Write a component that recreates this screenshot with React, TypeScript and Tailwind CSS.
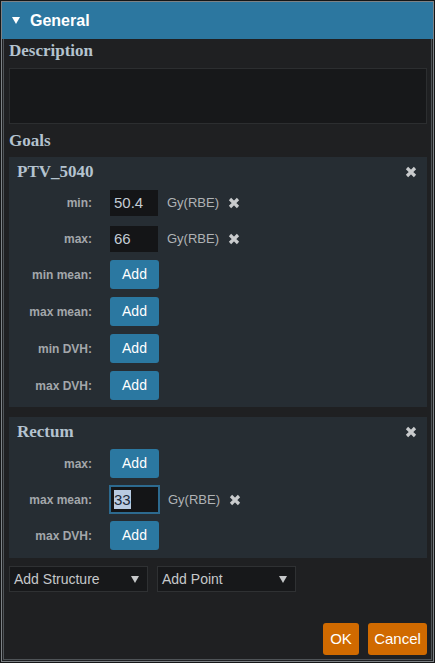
import React from "react";

const sans = { fontFamily: '"Liberation Sans", Arial, sans-serif' };
const serif = { fontFamily: '"Liberation Serif", Georgia, serif' };

function XIcon({ size = 12 }: { size?: number }) {
  return (
    <svg width={size} height={size} viewBox="0 0 12 12">
      <path d="M2 2 L10 10 M10 2 L2 10" stroke="#c9cbcd" strokeWidth="3.2" strokeLinecap="butt" />
    </svg>
  );
}

function Tri({ color, w = 9, h = 7 }: { color: string; w?: number; h?: number }) {
  return (
    <svg width={w} height={h} viewBox={`0 0 ${w} ${h}`}>
      <polygon points={`0,0 ${w},0 ${w / 2},${h}`} fill={color} />
    </svg>
  );
}

function Label({ children }: { children: React.ReactNode }) {
  return (
    <div className="w-[84px] text-right text-[12px] font-bold text-[#a3a7ab] pr-[1px]" style={sans}>
      {children}
    </div>
  );
}

function AddRow({ label }: { label: string }) {
  return (
    <div className="flex items-center h-[29px]">
      <Label>{label}</Label>
      <button
        className="ml-[17px] w-[49px] h-[29px] rounded-[3px] bg-[#2b78a1] text-white text-[14px] leading-[29px] text-center"
        style={sans}
      >
        Add
      </button>
    </div>
  );
}

function ValueRow({
  label,
  value,
  focused,
  className = "",
}: {
  label: string;
  value: string;
  focused?: boolean;
  className?: string;
}) {
  return (
    <div className={`flex items-center ${focused ? "h-[29px]" : "h-[26px]"} ${className}`}>
      <Label>{label}</Label>
      {focused ? (
        <div className="ml-[16px] w-[51px] h-[29px] border-2 border-[#2d6a8f] bg-[#141517] flex items-center pl-[3px]">
          <span className="bg-[#b9cbe2] text-[#1c2a3a] text-[15px] leading-[19px]" style={sans}>
            {value}
          </span>
        </div>
      ) : (
        <div
          className="ml-[17px] w-[48px] h-[26px] bg-[#141517] text-[#c3ccd4] text-[15px] leading-[25px] pl-[4px]"
          style={sans}
        >
          {value}
        </div>
      )}
      <span className={`${focused ? "ml-[8px]" : "ml-[9px]"} text-[13px] text-[#b0b3b6]`} style={sans}>
        Gy(RBE)
      </span>
      <span className="ml-[9px] flex items-center">
        <XIcon />
      </span>
    </div>
  );
}

function Card({ title, gap, children }: { title: string; gap: string; children: React.ReactNode }) {
  return (
    <div className={`bg-[#262d33] pt-[5px] flex flex-col ${gap}`}>
      <div className="flex items-center justify-between h-[20px] pl-[8px] pr-[10px]">
        <span className="text-[17px] font-bold text-[#b4c3cf] leading-[20px]" style={serif}>
          {title}
        </span>
        <XIcon />
      </div>
      {children}
    </div>
  );
}

function Select({ label }: { label: string }) {
  return (
    <div
      className="w-[139px] h-[26px] bg-[#17181a] border border-[#2f3133] flex items-center justify-between pl-[4px] pr-[8px] text-[14px] text-[#c6c8ca]"
      style={sans}
    >
      <span>{label}</span>
      <Tri color="#c6c8ca" w={8} h={7} />
    </div>
  );
}

export default function App() {
  return (
    <div className="w-[435px] h-[663px] bg-[#151617] p-px">
      <div className="h-full border border-[#7d8286] bg-[#1f2022] flex flex-col">
        <div className="h-[37px] shrink-0 bg-[#2c77a0] flex items-center pl-[10px]" style={sans}>
          <Tri color="#ffffff" w={8} h={7} />
          <span className="ml-[10px] text-white font-bold text-[16px]">General</span>
        </div>
        <div className="flex-1 mx-px mb-px border-x border-b border-[#4e5357] flex flex-col pl-[5px] pr-[4px]">
          <div className="h-[29px] shrink-0 pt-[2px] leading-[19px]">
            <span className="text-[17px] font-bold text-[#b4c3cf]" style={serif}>
              Description
            </span>
          </div>
          <div className="h-[56px] shrink-0 bg-[#17181a] border border-[#2c2e30]" />
          <div className="h-[33px] shrink-0 pt-[7px] leading-[19px]">
            <span className="text-[17px] font-bold text-[#b4c3cf]" style={serif}>
              Goals
            </span>
          </div>
          <Card title="PTV_5040" gap="gap-[8px] pb-[7px]">
            <ValueRow label="min:" value="50.4" className="mb-[2px]" />
            <ValueRow label="max:" value="66" />
            <AddRow label="min mean:" />
            <AddRow label="max mean:" />
            <AddRow label="min DVH:" />
            <AddRow label="max DVH:" />
          </Card>
          <div className="h-[10px] shrink-0" />
          <Card title="Rectum" gap="gap-[7px] pb-[8px]">
            <AddRow label="max:" />
            <ValueRow label="max mean:" value="33" focused />
            <AddRow label="max DVH:" />
          </Card>
          <div className="mt-[8px] flex gap-[9px]">
            <Select label="Add Structure" />
            <Select label="Add Point" />
          </div>
          <div className="flex-1" />
          <div className="flex justify-end gap-[9px] mb-[4px]" style={sans}>
            <button className="w-[36px] h-[32px] rounded-[3px] bg-[#d06a00] text-white text-[15px]">OK</button>
            <button className="w-[59px] h-[32px] rounded-[3px] bg-[#d06a00] text-white text-[15px]">Cancel</button>
          </div>
        </div>
      </div>
    </div>
  );
}
